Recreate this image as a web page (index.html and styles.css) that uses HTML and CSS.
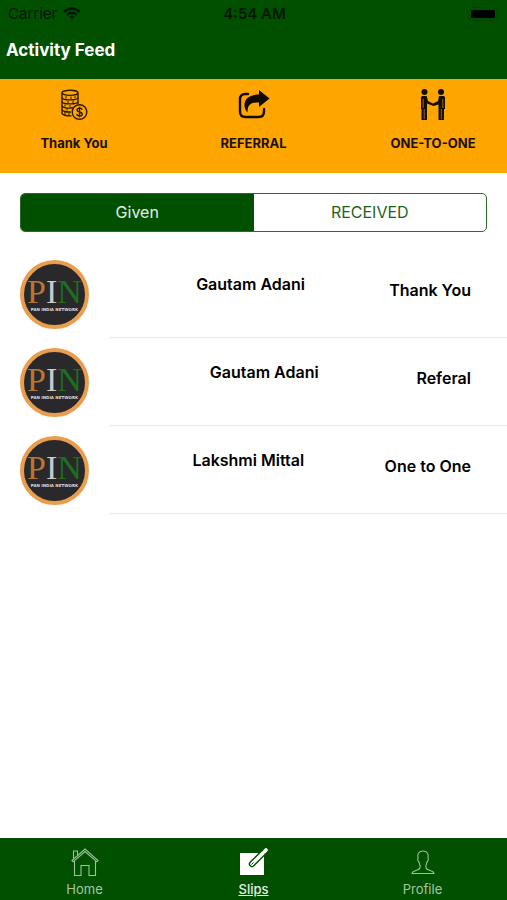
FILE: index.html
```html
<!DOCTYPE html>
<html lang="en">
<head>
    <meta charset="utf-8">
    <meta name="viewport" content="width=device-width, initial-scale=1">
    <title>Activity Feed</title>
    <link rel="stylesheet" href="styles.css">
</head>
<body>
<header class="header">
    <div class="status">
        <div class="carrier">
            <span>Carrier</span>
            <svg width="18" height="13" viewBox="0 0 18 13" fill="none" stroke="#001800" stroke-width="2.4">
                <path d="M1.2 4.8a11 11 0 0 1 15.6 0M4 7.8a7 7 0 0 1 10 0"/>
                <path d="M9 12.2L6.3 9.6a3.8 3.8 0 0 1 5.4 0z" fill="#001800" stroke="none"/>
            </svg>
        </div>
        <span class="time">4:54 AM</span>
        <svg class="battery" width="33" height="14" viewBox="0 0 33 14">
            <rect x="0.5" y="0.5" width="29" height="13" rx="4" fill="none" stroke="#004400"/>
            <rect x="3" y="3" width="24" height="8" rx="1.5" fill="#000"/>
            <path d="M31 5q1.500 2 0 4z" fill="#004400"/>
        </svg>
    </div>
    <h1>Activity Feed</h1>
</header>

<nav class="actions">
    <button type="button" class="action">
        <svg width="28" height="32" viewBox="0 0 28 32" fill="none" stroke="#2b1c00" stroke-width="1.4">
            <ellipse cx="10" cy="3.800" rx="8" ry="2.600"/>
            <path d="M2 3.800V24c0 2 4.500 3 9.500 2.800M18 3.800V15"/>
            <path d="M2 8.500c0 3.200 16 3.200 16 0M2 12.500c0 3.200 16 3.200 16 0M2 16.500c0 2.400 6 3.200 11 2.200M2 20.500c0 1.800 4 2.800 9 2.500"/>
            <path d="M6 7v2.500M11 7.500v2.500M15 7v2M8 12v2M13 12v2M5 15.500v2M10 16v2M7 19.500v2M5 23v2.500M9 23.500v2.500" stroke-width="1"/>
            <circle cx="19.500" cy="23" r="7.300"/>
            <path d="M22.200 20.800c-.4-2.300-5.200-2.300-5.200.1 0 2.800 5.300 1.500 5.300 4.200 0 2.500-5.200 2.500-5.500 0M19.500 17.800v10.400"/>
        </svg>
        <span>Thank You</span>
    </button>
    <button type="button" class="action">
        <svg width="32" height="32" viewBox="0 0 32 32" fill="none">
            <path d="M10 5H7.500Q2 5 2 10.500v12Q2 28 7.500 28h13q5.500 0 5.500-5.500V20" stroke="#100b00" stroke-width="2.4" stroke-linecap="round"/>
            <path d="M31.500 9.500L21 1v4.500C11 5.500 6 10 6.500 17c.3 3 1.500 5 3 6.500C9.500 16 12 13.500 21 13.500V18z" fill="#100b00"/>
        </svg>
        <span>REFERRAL</span>
    </button>
    <button type="button" class="action">
        <svg width="26" height="32" viewBox="0 0 26 32" fill="#140e00">
            <circle cx="4.500" cy="3" r="3"/>
            <circle cx="21" cy="3" r="3"/>
            <path d="M2.500 7h4.200l1.300 5 5 2.500L18 12l1-5h4.500q1.500 0 1.500 1.500V20h-1v11h-5.500V15.500L13.500 17 7 14.500V31H1.500V20H1V8.500Q1 7 2.500 7z"/>
            <path d="M3.200 10v9M22.800 10v9M4.200 20v10M21.300 20v10" stroke="#ffa500" stroke-width=".6"/>
        </svg>
        <span>ONE-TO-ONE</span>
    </button>
</nav>

<main>
    <div class="segments">
        <button type="button" class="segment selected">Given</button>
        <button type="button" class="segment">RECEIVED</button>
    </div>

    <ul class="feed">
        <li class="row">
            <div class="avatar">
                <div class="pin"><span class="p">P</span><span class="i">I</span><span class="n">N</span></div>
                <div class="network">PAN INDIA NETWORK</div>
            </div>
            <div class="row-text">
                <span class="person">Gautam Adani</span>
                <span class="kind">Thank You</span>
            </div>
        </li>
        <li class="row">
            <div class="avatar">
                <div class="pin"><span class="p">P</span><span class="i">I</span><span class="n">N</span></div>
                <div class="network">PAN INDIA NETWORK</div>
            </div>
            <div class="row-text">
                <span class="person">Gautam Adani</span>
                <span class="kind">Referal</span>
            </div>
        </li>
        <li class="row">
            <div class="avatar">
                <div class="pin"><span class="p">P</span><span class="i">I</span><span class="n">N</span></div>
                <div class="network">PAN INDIA NETWORK</div>
            </div>
            <div class="row-text">
                <span class="person">Lakshmi Mittal</span>
                <span class="kind">One to One</span>
            </div>
        </li>
    </ul>
</main>

<nav class="tabs">
    <a href="#" class="tab">
        <svg width="28" height="28" viewBox="0 0 28 28" fill="none" stroke="#9dc09d" stroke-width="1.1">
            <path d="M1 12.500L14 1l13 11.500-1.200 1.300L14 3.600 2.200 13.800z"/>
            <path d="M2.500 10.500V3h4v4M3.500 13v14.500H10v-10h8v10h6.500V13"/>
        </svg>
        <span>Home</span>
    </a>
    <a href="#" class="tab active">
        <svg width="28" height="28" viewBox="0 0 28 28" fill="none">
            <path d="M0 5h24v22H0z" fill="#fff"/>
            <path d="M12 16L26 2" stroke="#005000" stroke-width="6.500" stroke-linecap="round"/>
            <path d="M12 16L22.800 5.200" stroke="#fff" stroke-width="3.600" stroke-linecap="round"/>
            <path d="M24.600 3.400L26 2" stroke="#fff" stroke-width="3.600" stroke-linecap="round"/>
            <path d="M11.500 16.500l2-2" stroke="#005000" stroke-width="1"/>
        </svg>
        <span>Slips</span>
    </a>
    <a href="#" class="tab">
        <svg width="28" height="28" viewBox="0 0 28 28" fill="none" stroke="#9dc09d" stroke-width="1.100">
            <path d="M14 3C10 3 8 6 9 10c-.8 1.500.2 3.500 1 4 1 2.500 1.500 4.500.8 6.200-.5 1.300-3 2-5.300 2.800q-2.500 1-2.500 2.500h22q0-1.500-2.500-2.500c-2.300-.8-4.800-1.500-5.300-2.800-.7-1.700-.2-3.700.8-6.200.8-.5 1.800-2.500 1-4 1-4-1-7-5-7z"/>
        </svg>
        <span>Profile</span>
    </a>
</nav>
</body>
</html>
```

FILE: styles.css
```css
* {
    box-sizing: border-box;
}

body {
    display: flex;
    flex-direction: column;
    min-height: 100vh;
    margin: 0;
    font-family: Inter, "Liberation Sans", sans-serif;
    color: #000;
    background-color: #fff;
}

button {
    padding: 0;
    border: 0;
    font-family: inherit;
    color: inherit;
    background: none;
}

.header {
    height: 79px;
    background-color: #005000;
}

.status {
    display: grid;
    grid-template-columns: 1fr auto 1fr;
    align-items: center;
    height: 27px;
    padding: 0 6px 0 8px;
    font-size: 15px;
    color: #001800;
}

.carrier {
    display: flex;
    align-items: center;
    gap: 6px;
}

.time {
    font-weight: 600;
}

.battery {
    justify-self: end;
}

h1 {
    margin: 11px 6px 0;
    font-size: 17px;
    font-weight: 700;
    line-height: 24px;
    color: #fff;
}

.actions {
    display: flex;
    justify-content: space-between;
    height: 94px;
    padding: 10px 30px 0;
    background-color: #ffa500;
}

.action {
    display: flex;
    flex-direction: column;
    align-items: center;
    gap: 12px;
    width: 88px;
    font-size: 13px;
    font-weight: 700;
    line-height: 20px;
    color: #1a1100;
}

main {
    flex: 1;
}

.segments {
    display: flex;
    margin: 20px 20px 0;
    border: 1px solid #2a6b2a;
    border-radius: 5px;
    overflow: hidden;
}

.segment {
    flex: 1;
    height: 37px;
    padding-bottom: 2px;
    font-size: 16px;
    color: #1c641c;
}

.segment.selected {
    color: #e4eee4;
    background-color: #005000;
}

.feed {
    margin: 18px 0 0;
    padding: 0;
    list-style: none;
}

.row {
    display: flex;
    align-items: center;
    gap: 20px;
    height: 88px;
    padding-left: 20px;
}

.avatar {
    display: flex;
    flex: none;
    flex-direction: column;
    align-items: center;
    width: 69px;
    height: 69px;
    padding-top: 12px;
    border: 4px solid #eb9d4e;
    border-radius: 50%;
    background-color: #29282a;
}

.pin {
    font-family: "Liberation Serif", serif;
    font-size: 34px;
    line-height: 32px;
}

.p {
    color: #b97532;
}

.i {
    color: #c9cacc;
}

.n {
    color: #1c701d;
}

.network {
    font-family: "DejaVu Sans", sans-serif;
    font-size: 4px;
    font-weight: 700;
    line-height: 4px;
    white-space: nowrap;
    color: #ddd;
}

.row-text {
    display: flex;
    flex: 1;
    align-self: stretch;
    padding-right: 36px;
    border-bottom: 1px solid #e9e9e9;
    font-size: 16px;
    font-weight: 600;
    line-height: 20px;
}

.person {
    flex: 1;
    margin-top: 24px;
    padding-left: 3px;
    text-align: center;
}

.kind {
    margin-top: 30px;
}

.tabs {
    display: flex;
    height: 62px;
    background-color: #005000;
}

.tab {
    display: flex;
    flex: 1;
    flex-direction: column;
    align-items: center;
    gap: 4px;
    padding-top: 10px;
    font-size: 13px;
    line-height: 18px;
    text-decoration: none;
    color: #a6c6a6;
}

.tab.active {
    font-weight: 500;
    text-decoration: underline;
    color: #e6efe6;
}
```
